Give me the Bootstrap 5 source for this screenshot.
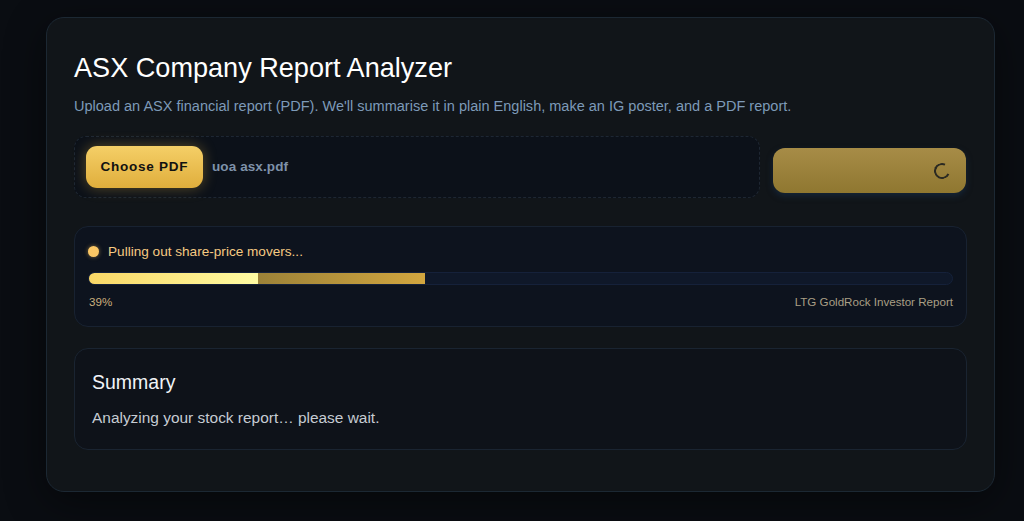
<!doctype html>
<html lang="en"><head><meta charset="utf-8"><title>ASX Company Report Analyzer</title>
<link href="https://cdn.jsdelivr.net/npm/bootstrap@5.3.0/dist/css/bootstrap.min.css" rel="stylesheet">
<style>
html,body{height:521px;overflow:hidden}
body{background:#0a0d12;font-family:"Liberation Sans",Arial,sans-serif;padding:17px 30px 0 46px}
.shell{width:949px;height:475px;background:#111519;border:1px solid #1c2833;border-radius:18px;padding:28px 27px;box-shadow:0 10px 40px rgba(0,0,0,.45)}
.ttl{font-size:27.1px;line-height:43px;height:43px;margin:0;color:#fff;font-weight:400}
.sub{font-size:14.52px;line-height:20px;margin:7px 0 20px;color:#7d9ab8}
.top-row{gap:13px;align-items:flex-start}
.drop{width:686px;height:62px;background:#0c1119;border:1px dashed #1e2733;border-radius:12px;padding:9px 11px;gap:9px}
.pick{width:117px;height:42px;padding:0;border:0;border-radius:11px;color:#111;font-size:13.5px;font-weight:700;letter-spacing:.75px;background:linear-gradient(180deg,#f5cf67,#e0ae3c);box-shadow:0 0 14px rgba(240,190,70,.35)}
.fname{font-size:13.5px;font-weight:700;color:#7f92a9;letter-spacing:.1px}
.go{width:193px;height:45px;margin-top:12px;padding:0 16px;border:0;border-radius:12px;background:linear-gradient(180deg,#a78c47,#8f7730);box-shadow:0 3px 6px rgba(24,50,80,.55)}
.spin{width:16px;height:16px;border:2.5px solid #2b2a22;border-right-color:transparent;border-radius:50%;transform:rotate(-20deg)}
.prog{height:101px;margin-top:28px;background:#0d131e;border:1px solid #182231;border-radius:14px;padding:14px 13px 0 13px}
.dot{width:11px;height:11px;border-radius:50%;background:#fcc865;box-shadow:0 0 4px rgba(252,200,101,.5);transform:translateY(-1px)}
.stat{gap:9px;height:22px;font-size:13.6px;color:#f6ca82}
.track{height:13px;margin-top:9px;background:#0f1829;border:1px solid #15213a;border-radius:7px;overflow:hidden}
.seg-a{width:168.5px;background:linear-gradient(90deg,#f9d766,#fffca3)}
.seg-b{width:167.5px;background:linear-gradient(90deg,#9c8238,#d2a63f)}
.meta{margin-top:9px;padding-left:1px;font-size:11.6px;line-height:15px}
.pct{color:#c9ae7c}.rpt{color:#a99f85}
.sumry{height:102px;margin-top:21px;background:#0e1219;border:1px solid #1a2431;border-radius:14px;padding:21px 17px}
.sumry h2{font-size:19.5px;line-height:24px;margin:0 0 14px;color:#f1f4f7;font-weight:400}
.sumry p{font-size:15.45px;line-height:20px;margin:0;color:#c6ccd3}
</style></head>
<body>
<main class="shell">
<h1 class="ttl">ASX Company Report Analyzer</h1>
<p class="sub">Upload an ASX financial report (PDF). We'll summarise it in plain English, make an IG poster, and a PDF report.</p>
<div class="d-flex top-row">
<div class="drop d-flex align-items-center"><button class="btn pick" type="button">Choose PDF</button><span class="fname">uoa asx.pdf</span></div>
<button class="btn go d-flex align-items-center justify-content-end" type="button" aria-label="Analyzing"><span class="spin d-block"></span></button>
</div>
<section class="prog">
<div class="stat d-flex align-items-center"><span class="dot"></span><span>Pulling out share-price movers...</span></div>
<div class="track d-flex"><div class="seg-a"></div><div class="seg-b"></div></div>
<div class="meta d-flex justify-content-between"><span class="pct">39%</span><span class="rpt">LTG GoldRock Investor Report</span></div>
</section>
<section class="sumry"><h2>Summary</h2><p>Analyzing your stock report… please wait.</p></section>
</main>
<script src="https://cdn.jsdelivr.net/npm/bootstrap@5.3.0/dist/js/bootstrap.bundle.min.js"></script>
</body></html>
